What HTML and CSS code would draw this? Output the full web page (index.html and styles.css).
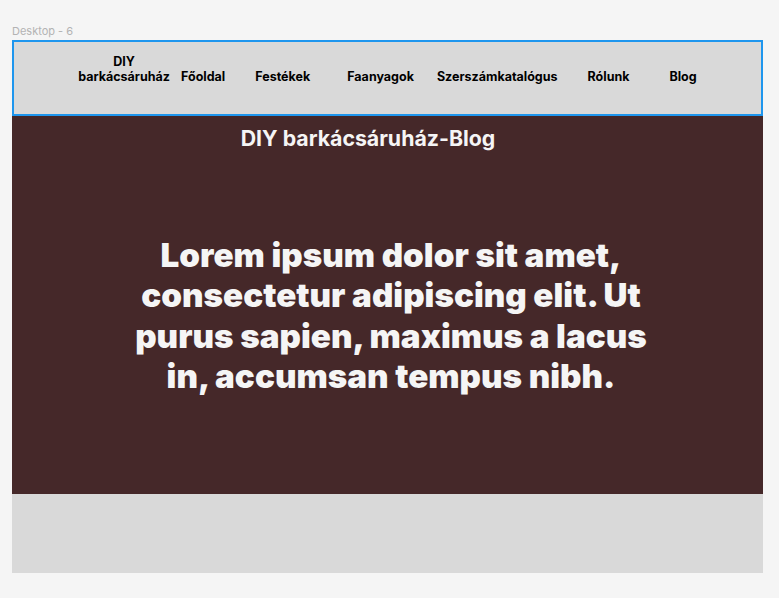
FILE: index.html
```html
<!DOCTYPE html>
<html lang="hu">
<head>
<meta charset="utf-8">
<title>Desktop - 6</title>
<link rel="stylesheet" href="styles.css">
</head>
<body>
<div class="canvas">
  <div class="frame-label">Desktop - 6</div>
  <div class="frame">
    <nav class="nav">
      <div class="logo">DIY<br>barkácsáruház</div>
      <a class="item i1">Főoldal</a>
      <a class="item i2">Festékek</a>
      <a class="item i3">Faanyagok</a>
      <a class="item i4">Szerszámkatalógus</a>
      <a class="item i5">Rólunk</a>
      <a class="item i6">Blog</a>
    </nav>
    <section class="hero">
      <h1 class="hero-title">DIY barkácsáruház-Blog</h1>
      <p class="hero-text">Lorem ipsum dolor sit amet, consectetur adipiscing elit. Ut purus sapien, maximus a lacus in, accumsan tempus nibh.</p>
    </section>
    <div class="footer"></div>
  </div>
</div>
</body>
</html>
```
FILE: styles.css
```css
* { box-sizing: border-box; }
html, body { margin: 0; padding: 0; }
body {
  background: #f5f5f5;
  font-family: Inter, "Noto Sans", sans-serif;
  width: 779px;
  height: 598px;
  overflow: hidden;
}
.canvas {
  padding: 24px 16px 0 12px;
}
.frame-label {
  font-size: 11px;
  line-height: 14px;
  color: #b3b3b3;
  height: 16px;
}
.frame {
  width: 751px;
  display: flex;
  flex-direction: column;
}
.nav {
  height: 76px;
  background: #d9d9d9;
  border: 2px solid #1e96ee;
  display: flex;
  align-items: flex-end;
  padding: 0 0 30px 0;
  font-size: 12.5px;
  font-weight: 700;
  line-height: 15px;
  color: #000;
}
.logo {
  text-align: center;
  width: 100px;
  margin-left: 60px;
}
.item { white-space: nowrap; }
.i1 { margin-left: 7px; }
.i2 { margin-left: 30px; }
.i3 { margin-left: 37px; }
.i4 { margin-left: 23px; }
.i5 { margin-left: 30px; }
.i6 { margin-left: 40px; }
.hero {
  height: 378px;
  background: #452829;
  color: #f5f5f5;
  display: flex;
  flex-direction: column;
  align-items: center;
}
.hero-title {
  margin: 10px 0 0 -39px;
  font-size: 21.3px;
  line-height: 24px;
  font-weight: 700;
}
.hero-text {
  margin: 85px 0 0 7px;
  width: 540px;
  text-align: center;
  font-size: 33.2px;
  line-height: 40.3px;
  font-weight: 900;
}
.footer {
  height: 79px;
  background: #d9d9d9;
}
```
